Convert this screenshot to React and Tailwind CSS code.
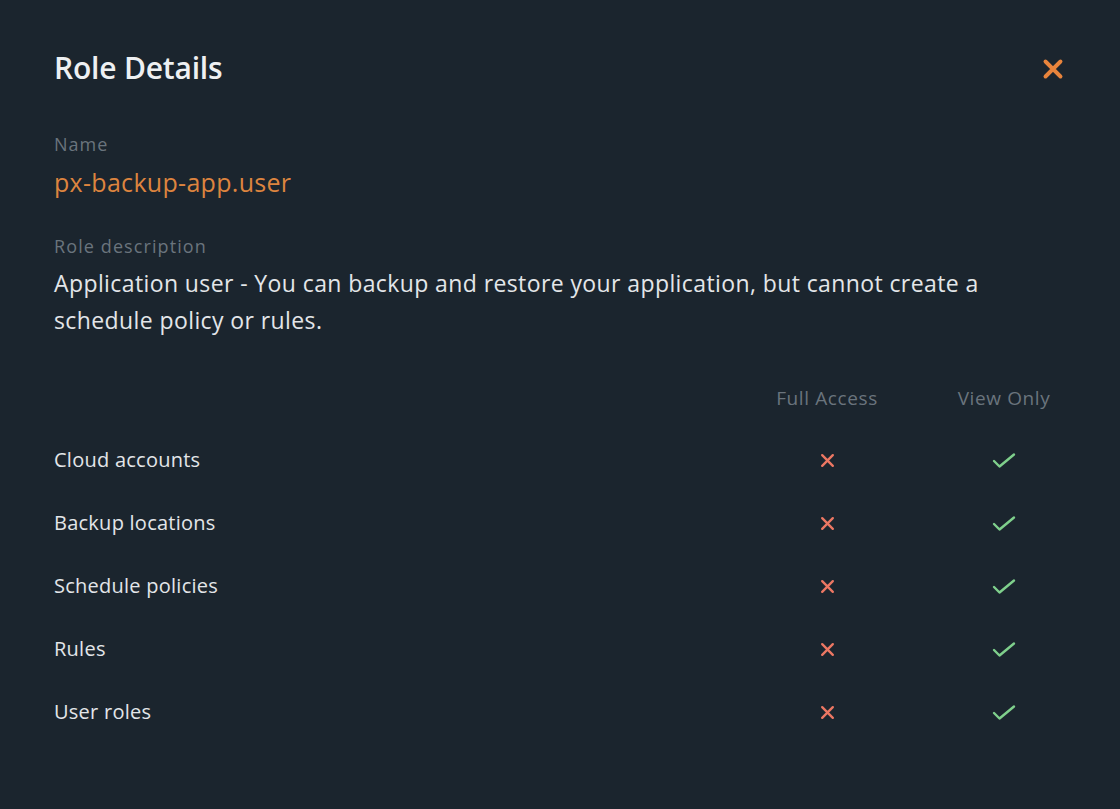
import React from 'react';

const permissions = [
  { name: 'Cloud accounts', full: false, view: true },
  { name: 'Backup locations', full: false, view: true },
  { name: 'Schedule policies', full: false, view: true },
  { name: 'Rules', full: false, view: true },
  { name: 'User roles', full: false, view: true },
];

const CrossIcon = ({ className, strokeWidth = 2.2 }) => (
  <svg className={className} viewBox="0 0 16 16" fill="none" stroke="currentColor" strokeWidth={strokeWidth} strokeLinecap="round">
    <path d="M3 3l10 10M13 3L3 13" />
  </svg>
);

const CheckIcon = ({ className }) => (
  <svg className={className} viewBox="0 0 24 16" fill="none" stroke="currentColor" strokeWidth="2.4" strokeLinecap="round" strokeLinejoin="round">
    <path d="M2 8.5l5.5 5.5L22 2" />
  </svg>
);

const App = () => {
  return (
    <div
      className="w-[1120px] h-[809px] bg-[#1b252e] text-[#e1e4e7] overflow-hidden"
      style={{ fontFamily: '"Open Sans", "Noto Sans", sans-serif' }}
    >
      <div className="pl-[54px] pr-[54px] pt-[48px]">
        <div className="flex items-center justify-between">
          <h1 className="text-[30px] leading-[40px] font-semibold text-[#eef0f2] tracking-[-0.2px]">Role Details</h1>
          <button className="text-[#e8843c] mr-[1px] mt-[2px]">
            <CrossIcon className="w-[24px] h-[24px]" strokeWidth={2.6} />
          </button>
        </div>

        <div className="mt-[44px]">
          <div className="text-[18px] leading-[24px] tracking-[1px] text-[#6a747d]">Name</div>
          <div className="mt-[10px] text-[25px] leading-[32px] tracking-[0.3px] text-[#dd843f]">px-backup-app.user</div>
        </div>

        <div className="mt-[36px]">
          <div className="text-[18px] leading-[24px] tracking-[1.1px] text-[#6a747d]">Role description</div>
          <p className="mt-[7px] text-[23px] leading-[37px] tracking-[0.4px] text-[#e3e6e9]">
            Application user - You can backup and restore your application, but cannot create a schedule policy or rules.
          </p>
        </div>

        <div className="mt-[46px] grid grid-cols-[1fr_124px_124px] gap-x-[53px] items-center">
          <div></div>
          <div className="text-center text-[19px] leading-[26px] tracking-[0.6px] text-[#6a747d]">Full Access</div>
          <div className="text-center text-[19px] leading-[26px] tracking-[0.6px] text-[#6a747d]">View Only</div>

          {permissions.map((p, i) => (
            <React.Fragment key={p.name}>
              <div className={`${i === 0 ? 'mt-[36px]' : 'mt-[37px]'} text-[20px] leading-[26px] tracking-[0.25px] text-[#e3e6e9]`}>{p.name}</div>
              <div className={`${i === 0 ? 'mt-[36px]' : 'mt-[37px]'} flex justify-center`}>
                {p.full ? (
                  <CheckIcon className="w-[24px] h-[17px] text-[#7fd08c]" />
                ) : (
                  <CrossIcon className="w-[17px] h-[17px] text-[#ec7763]" />
                )}
              </div>
              <div className={`${i === 0 ? 'mt-[36px]' : 'mt-[37px]'} flex justify-center`}>
                {p.view ? (
                  <CheckIcon className="w-[24px] h-[17px] text-[#7fd08c]" />
                ) : (
                  <CrossIcon className="w-[17px] h-[17px] text-[#ec7763]" />
                )}
              </div>
            </React.Fragment>
          ))}
        </div>
      </div>
    </div>
  );
};

export default App;
